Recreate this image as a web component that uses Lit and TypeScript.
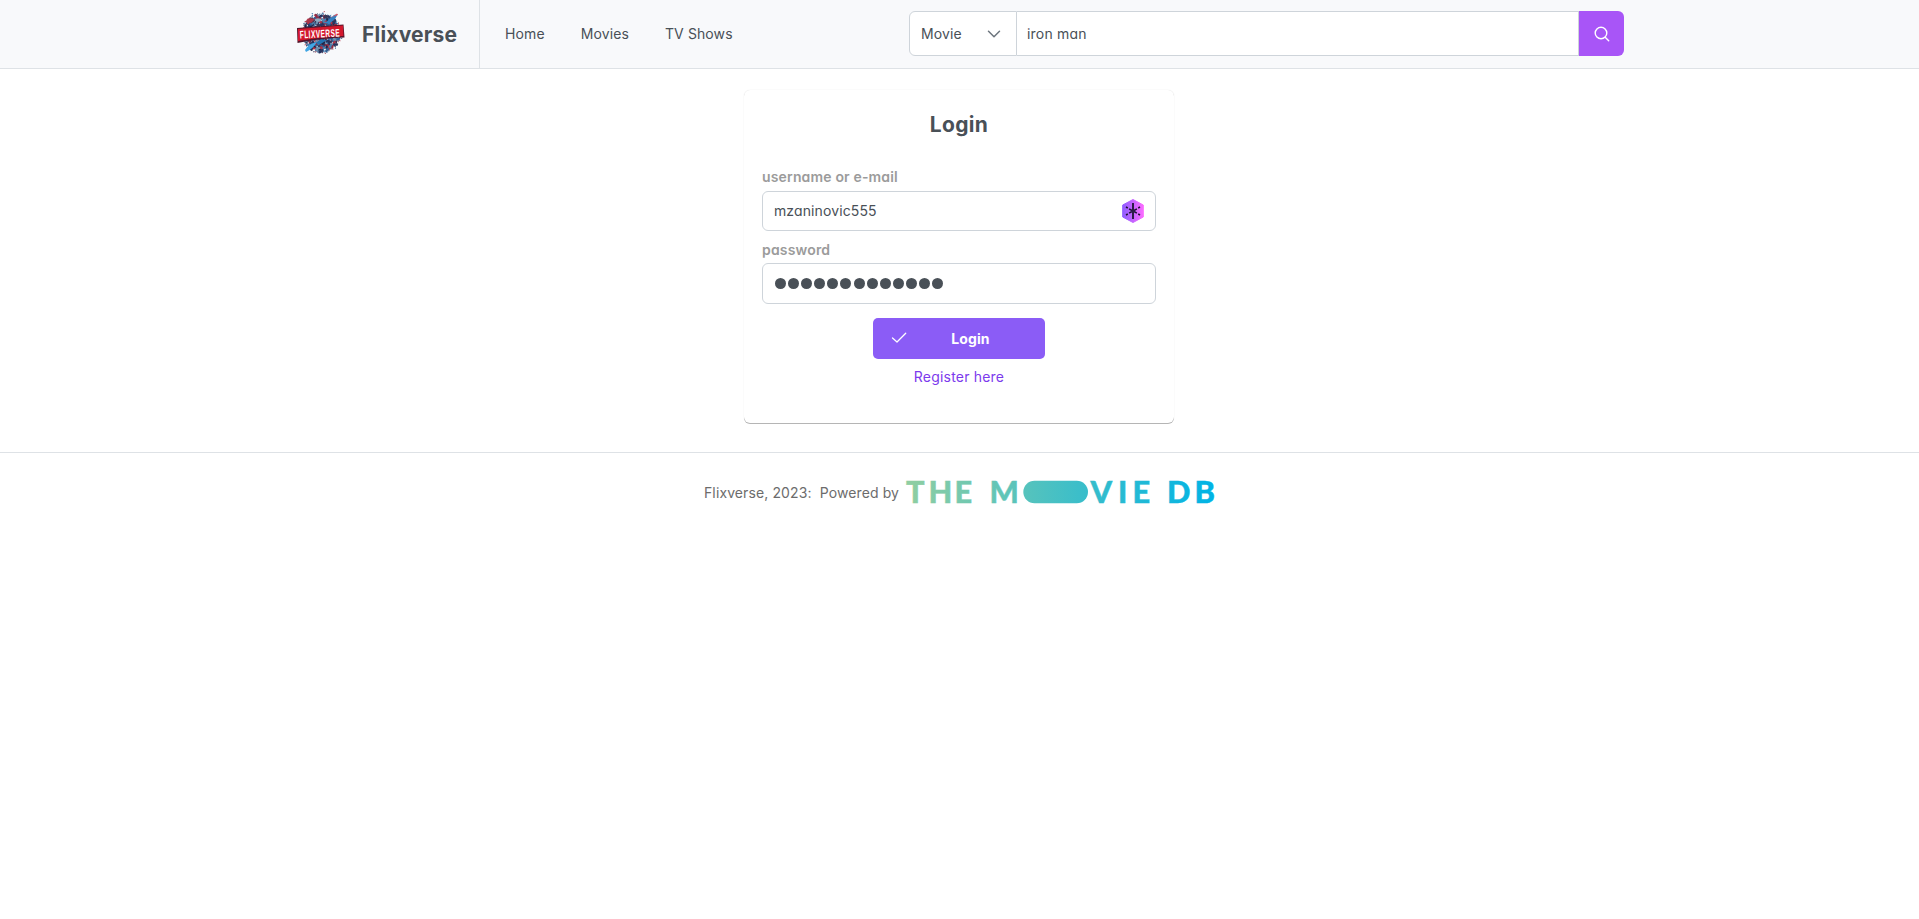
import { LitElement, html, css, svg } from "lit";
import { customElement } from "lit/decorators.js";

// Deterministic shards that make up the burst behind the brand banner.
const SHARD_COLORS = ["#1d2748", "#2f5f94", "#b23346", "#26345f", "#4a80b0", "#3a3554", "#6f8fae", "#8e2c45"];
const shards = Array.from({ length: 300 }, (_, i) => {
  const angle = i * 2.39996;
  const dist = Math.sqrt((i + 1) / 300);
  const spread = i % 5 === 0 ? 1.06 : 0.97;
  return {
    x: 25.5 + Math.cos(angle) * dist * 20.5 * spread,
    y: 22 + Math.sin(angle) * dist * 20.5 * spread,
    r: dist > 0.92 ? 0.6 : 0.9 + ((i * 7) % 5) * 0.28,
    turn: (i * 47) % 180,
    color: SHARD_COLORS[(i * 5 + (i >> 2)) % SHARD_COLORS.length],
  };
});

@customElement("brand-logo")
export class BrandLogo extends LitElement {
  static styles = css`
    :host { display: block; width: 50px; height: 44px; }
    svg { display: block; overflow: visible; }
    .word { font: 700 12px "Liberation Sans", sans-serif; letter-spacing: .9px; fill: #fff; }
  `;
  render() {
    return html`<svg width="50" height="44" viewBox="0 0 50 44">
      ${shards.map(
        (s) => svg`<ellipse cx=${s.x} cy=${s.y} rx=${s.r * 1.5} ry=${s.r * 0.75} fill=${s.color}
          transform="rotate(${s.turn} ${s.x} ${s.y})" />`
      )}
      <path d="M29 12 38 4 42 3 39 8 33 13Z" fill="#3481c1" />
      <path d="M36 6 41 2.500 42 4Z" fill="#e4575f" />
      <path d="M8 11 14 7 19 8 15 12Z" fill="#a93649" />
      <ellipse cx="22" cy="9" rx="3.200" ry="1.800" fill="#8babc3" />
      <path d="M9 39 Q12 33 21 31 Q17 38 10 41Z" fill="#41a6e4" />
      <path d="M20 32 25 28 31 29 23 34Z" fill="#2474b3" />
      <path d="M1 17 Q24 15 47.500 13.500 L48.500 26.500 Q25 27 1.500 32Z" fill="#54152b" />
      <path d="M2 18 Q24 16 47 14.500 L47.500 25 Q24 26 2 30Z" fill="#d3182d" />
      <text class="word" transform="translate(4 27.600) rotate(-3) scale(.54 .92)">FLIXVERSE</text>
    </svg>`;
  }
}

@customElement("tmdb-logo")
export class TmdbLogo extends LitElement {
  static styles = css`
    :host { display: block; width: 309px; height: 24px; }
    svg { display: block; overflow: visible; }
    .word { font: 900 30.800px Lato, sans-serif; fill: url(#sea); stroke: url(#sea); stroke-width: .4px; }
  `;
  render() {
    return html`<svg width="309" height="24" viewBox="0 0 309 24">
      <defs>
        <linearGradient id="sea" gradientUnits="userSpaceOnUse" x1="0" y1="0" x2="308" y2="0">
          <stop offset="0" stop-color="#90cea1" />
          <stop offset=".56" stop-color="#3cbec9" />
          <stop offset="1" stop-color="#00b3e5" />
        </linearGradient>
      </defs>
      <text class="word" x="0 22.500 48.500" y="23">THE</text>
      <text class="word" x="83.500" y="23">M</text>
      <rect x="117.300" y=".7" width="64.700" height="22.500" rx="11.250" fill="url(#sea)" />
      <text class="word" x="184.500 212 226.500" y="23">VIE</text>
      <text class="word" x="261 288.500" y="23">DB</text>
    </svg>`;
  }
}

@customElement("app-root")
export class AppRoot extends LitElement {
  static styles = css`
    :host {
      display: block;
      min-height: 919px;
      background: #fff;
      color: #495057;
      font: 400 14px/21px Inter, sans-serif;
      letter-spacing: .11px;
    }
    * { box-sizing: border-box; }
    svg { display: block; }
    .header {
      height: 69px;
      display: flex;
      padding-left: 296px;
      background: #f8f9fb;
      border-bottom: 1px solid #dee2e6;
    }
    .brand { display: flex; width: 184px; padding-top: 11px; border-right: 1px solid #dee2e6; }
    .name { margin: 11px 0 0 16px; font-size: 21px; font-weight: 700; line-height: 26px; letter-spacing: .2px; }
    .nav { display: flex; gap: 36px; width: 429px; padding: 23px 0 0 25px; }
    .search { display: flex; width: 715px; height: 45px; margin-top: 11px; }
    .kind {
      width: 108px; display: flex; align-items: center; justify-content: space-between;
      padding: 0 15px 0 11px; background: #fff; border: 1px solid #ced4da; border-radius: 6px 0 0 6px;
    }
    .query {
      flex: 1; display: flex; align-items: center; padding-left: 10px; background: #fff;
      border: 1px solid #ced4da; border-left: 0; letter-spacing: .2px;
    }
    .alt { font-feature-settings: "cv02", "cv03", "cv04", "cv11"; }
    .go {
      width: 45px; display: grid; place-items: center; background: #a855f7; border-radius: 0 6px 6px 0;
    }
    .card {
      width: 430px; height: 333px; margin: 21px 0 0 744px;
      padding: 19px 18px 0; display: flex; flex-direction: column; border-radius: 6px; background: #fff;
      box-shadow: 0 1px 0 0 rgba(0,0,0,.28), 0 0 1px 0 rgba(0,0,0,.16);
    }
    .title { margin: 3px 0 28px; text-align: center; font-size: 21px; line-height: 26px; font-weight: 700; letter-spacing: .3px; }
    .label { height: 21px; color: #9b9b9b; font-weight: 600; letter-spacing: .16px; }
    .field {
      height: 40px; margin: 4px 0 8px; padding: 0 11px 1px; display: flex; align-items: center;
      justify-content: space-between; border: 1px solid #ced4da; border-radius: 6px;
    }
    .secret { height: 41px; margin: 3px 0 14px; padding-bottom: 0; }
    .dots { display: flex; gap: 2.100px; padding-left: 1px; }
    .dot { width: 11px; height: 11px; border-radius: 50%; background: #495057; }
    .login {
      width: 172px; height: 41px; align-self: center; display: flex; align-items: center;
      padding: 0 18px; background: #8b5cf6; border-radius: 5px; color: #fff; font-weight: 700;
    }
    .login svg { margin-top: -1px; }
    .caption { flex: 1; text-align: center; padding-left: 7px; }
    .register { margin-top: 7px; text-align: center; color: #7c3aed; letter-spacing: .2px; }
    .footer {
      display: flex; margin-top: 29px; padding: 27px 0 0 704px; border-top: 1px solid #dee2e6;
    }
    .note { color: #6c6c6c; width: 202px; white-space: pre; padding-top: 2px; }
  `;

  render() {
    return html`
      <header class="header">
        <div class="brand"><brand-logo></brand-logo><span class="name">Flixverse</span></div>
        <nav class="nav"><span>Home</span><span>Movies</span><span>TV Shows</span></nav>
        <div class="search">
          <div class="kind">
            Movie
            <svg width="14" height="14" viewBox="0 0 14 14" fill="none" stroke="#6c757d" stroke-width="1.500" stroke-linecap="round" stroke-linejoin="round"><path d="M1.500 4.300 7 9.700l5.500-5.400" /></svg>
          </div>
          <div class="query alt">iron man</div>
          <div class="go">
            <svg width="16" height="16" viewBox="0 0 16 16" fill="none" stroke="#fff" stroke-width="1.400" stroke-linecap="round"><circle cx="7" cy="7" r="5.800" /><path d="m11.200 11.200 3.500 3.500" /></svg>
          </div>
        </div>
      </header>
      <main class="card">
        <h1 class="title">Login</h1>
        <label class="label alt">username or e-mail</label>
        <div class="field alt">
          mzaninovic555
          <svg width="22" height="24" viewBox="0 0 22 24">
            <defs><linearGradient id="hex"><stop stop-color="#8f5cff" /><stop offset="1" stop-color="#fb6bff" /></linearGradient></defs>
            <path d="M11 .5 21.300 6v12L11 23.500.700 18V6Z" fill="url(#hex)" stroke="url(#hex)" stroke-linejoin="round" />
            <path d="M11 4v16" stroke="#1d1335" stroke-width="1.800" />
            <path d="m4 8 1.800 1m1.300.8L10 11.500M18 8l-1.800 1m-1.300.8L12 11.500M4 16l1.800-1m1.300-.8L10 12.500M18 16l-1.800-1m-1.300-.8L12 12.500" fill="none" stroke="#1d1335" stroke-width="1.500" />
          </svg>
        </div>
        <label class="label alt">password</label>
        <div class="field secret"><span class="dots">${Array.from({ length: 13 }, () => html`<i class="dot"></i>`)}</span></div>
        <div class="login">
          <svg width="16" height="14" viewBox="0 0 16 14" fill="none" stroke="#fff" stroke-width="1.300" stroke-linecap="round" stroke-linejoin="round"><path d="M1.500 7 6 11 14.700 2.300" /></svg>
          <span class="caption">Login</span>
        </div>
        <span class="register">Register here</span>
      </main>
      <footer class="footer"><span class="note">Flixverse, 2023:  Powered by</span><tmdb-logo></tmdb-logo></footer>
    `;
  }
}
